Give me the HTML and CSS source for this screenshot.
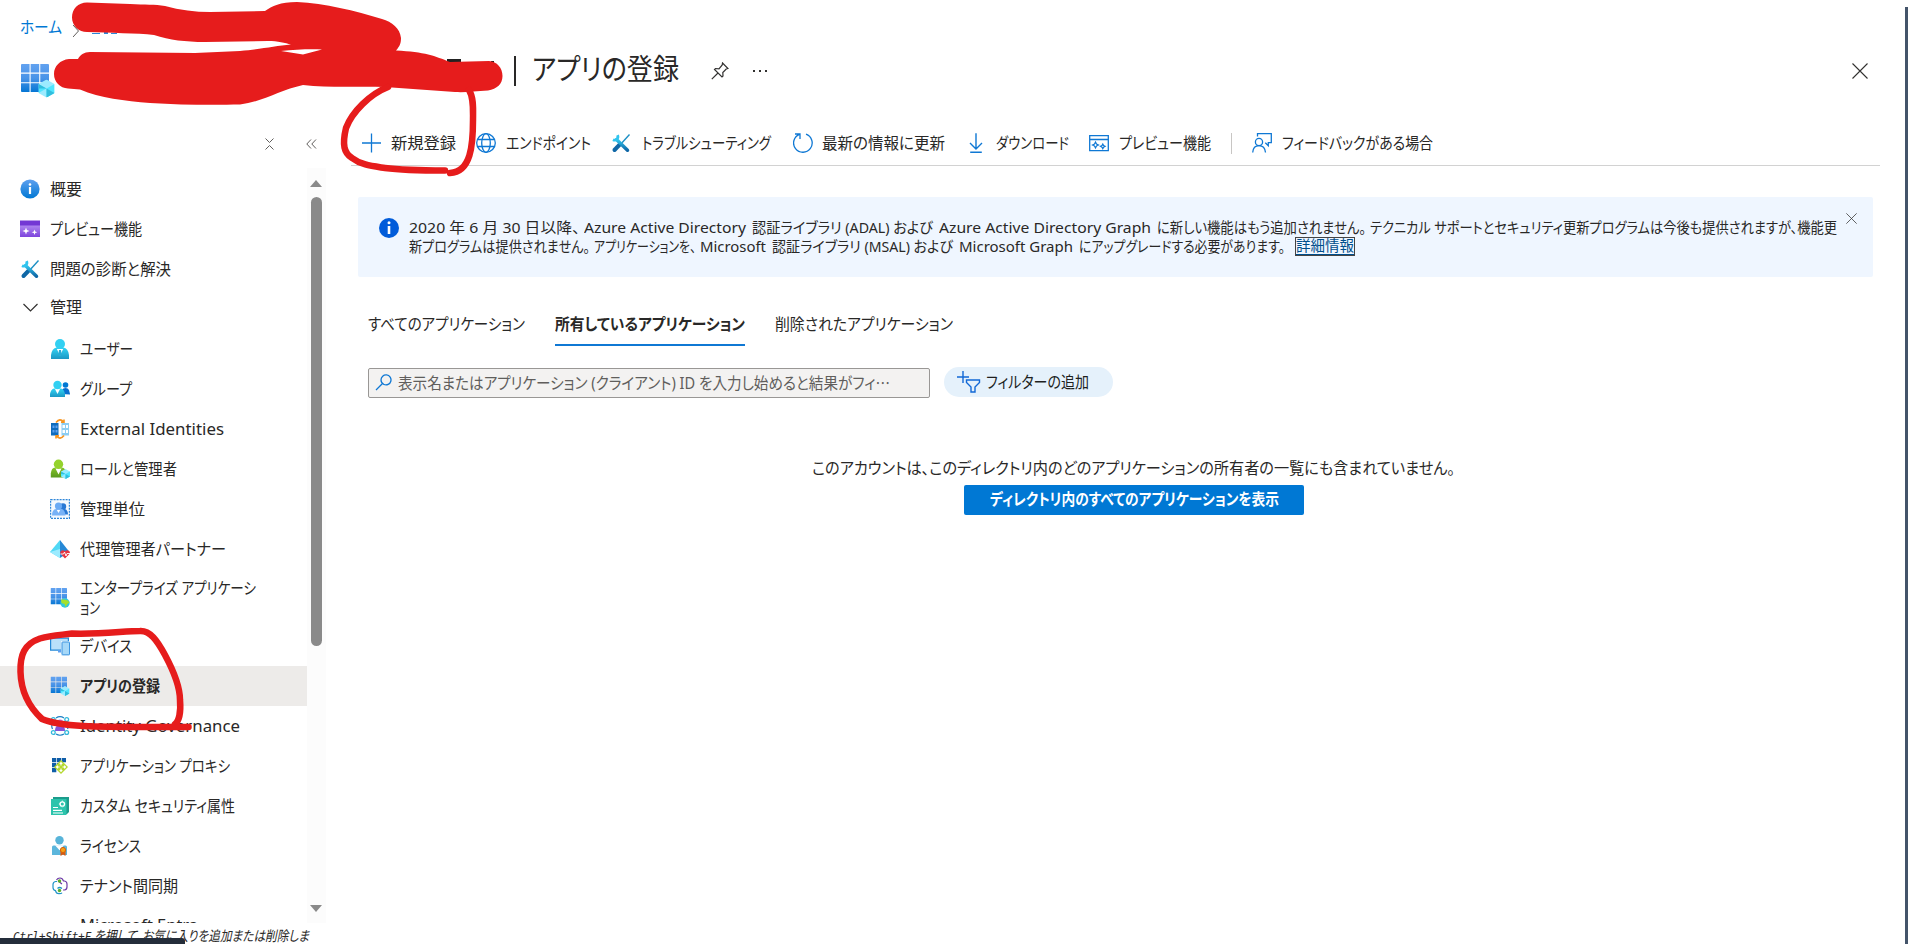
FILE: index.html
```html
<!DOCTYPE html>
<html lang="ja">
<head>
<meta charset="utf-8">
<title>アプリの登録</title>
<link rel="stylesheet" href="styles.css">
</head>
<body>
<svg class="defs" width="0" height="0" aria-hidden="true">
  <defs>
    <linearGradient id="gBlue" x1="0" y1="0" x2="0" y2="1"><stop offset="0" stop-color="#5ea0ef"/><stop offset="1" stop-color="#0078d4"/></linearGradient>
    <linearGradient id="gGrid" gradientUnits="userSpaceOnUse" x1="0" y1="0" x2="0" y2="18"><stop offset="0" stop-color="#62a2f0"/><stop offset=".5" stop-color="#4a94e8"/><stop offset="1" stop-color="#0576d4"/></linearGradient>
    <linearGradient id="gCyan" x1="0" y1="0" x2="0" y2="1"><stop offset="0" stop-color="#32d4f5"/><stop offset="1" stop-color="#1b97c4"/></linearGradient>
    <linearGradient id="gGreen" x1="0" y1="0" x2="0" y2="1"><stop offset="0" stop-color="#86c42a"/><stop offset="1" stop-color="#5a9a1e"/></linearGradient>
    <linearGradient id="gTool" x1="0" y1="0" x2="0" y2="1"><stop offset="0" stop-color="#32c8f0"/><stop offset="1" stop-color="#0f67a6"/></linearGradient>
    <linearGradient id="gPurple" x1="0" y1="0" x2="0" y2="1"><stop offset="0" stop-color="#b48cf2"/><stop offset="1" stop-color="#7d45dc"/></linearGradient>
  </defs>
  <symbol id="cube" viewBox="0 0 16 18"><path fill="#9cebff" d="M8 0l8 4.500v9L8 18 0 13.500v-9z"/><path fill="#50e6ff" d="M8 9l8-4.500v9L8 18zM0 4.500L8 9l-8 4.500z"/><path fill="#32bedd" d="M8 9l8 4.500L8 18zM0 4.500L8 9 0 9z"/></symbol>
  <symbol id="grid" viewBox="0 0 18 18"><path fill="url(#gGrid)" d="M0 .6Q0 0 .6 0H5.500V5.500H0zM6.200 0h5.500v5.500H6.200zM12.400 0h5q.6 0 .6.6v4.900h-5.600zM0 6.200h5.500v5.500H0zM6.200 6.200h5.500v5.500H6.200zM12.400 6.200H18v5.500h-5.600zM0 12.400h5.500V18H.6q-.6 0-.6-.6zM6.200 12.400h5.500V18H6.200zM12.400 12.400H18V18h-5.600z"/></symbol>
  <symbol id="info" viewBox="0 0 20 20"><circle cx="10" cy="10" r="9.600" fill="url(#gBlue)"/><circle cx="10" cy="5.500" r="1.300" fill="#fff"/><path fill="#fff" d="M8.900 8h2.200v7H8.900z"/></symbol>
  <symbol id="infoSolid" viewBox="0 0 20 20"><circle cx="10" cy="10" r="10" fill="#015cda"/><circle cx="10" cy="4.800" r="1.500" fill="#fff"/><path fill="#fff" d="M8.700 8h2.600v8H8.700z"/></symbol>
  <symbol id="preview" viewBox="0 0 20 20"><path fill="url(#gPurple)" d="M0 5h20v13H0z"/><path fill="#7337d4" d="M0 1.500h20v5H0z"/><path fill="#fff" d="M6 8.500l.9 2.600 2.600.9-2.600.9L6 15.500l-.9-2.600L2.500 12l2.600-.9zM14.500 10.500l.7 2.100 2.100.7-2.100.7-.7 2.100-.7-2.100-2.100-.7 2.100-.7z"/></symbol>
  <symbol id="tools" viewBox="0 0 20 20"><path stroke="#1c8fc4" stroke-width="1.400" d="M18.500 1.500L9 12"/><path stroke="#0f67a6" stroke-width="4" stroke-linecap="round" d="M8.300 12L3.500 17"/><path fill="none" stroke="url(#gTool)" stroke-width="3.500" stroke-linecap="round" d="M5.500 6.500L16.500 17.200"/><path fill="none" stroke="#30c4ee" stroke-width="2.800" d="M6.500 2.200c1.500 3-1.500 6-4.500 4.500"/></symbol>
  <symbol id="chev" viewBox="0 0 20 20"><path fill="none" stroke="#323130" stroke-width="1.200" d="M3.500 7l7 7 7-7"/></symbol>
  <symbol id="user" viewBox="0 0 20 20"><path fill="url(#gCyan)" d="M1 20v-4q1-7 5.500-7.500h7Q18 9 19 16v4z"/><path fill="#fff" d="M6.800 10h6.400L10 16.500z"/><circle cx="10" cy="5" r="5" fill="#32d0f2"/><path fill="#28acd6" d="M9 11h2l.7 4.500L10 17l-1.700-1.500z"/></symbol>
  <symbol id="group" viewBox="0 0 20 20"><circle cx="15.500" cy="6" r="2.800" fill="#0078d4"/><path fill="#0a6fd0" d="M11 15l1-4q1-2 3.500-2t3.500 2l1 4v.5z"/><path fill="url(#gCyan)" d="M0 18v-3q1-5 4-5.500h7q3 .5 4 5.500v3z"/><path fill="#fff" d="M5 10h5l-2.500 5z"/><circle cx="7.500" cy="6" r="4.200" fill="#32d0f2"/></symbol>
  <symbol id="external" viewBox="0 0 20 20"><path fill="#0f6cbd" d="M1 4h7.500v12.500H1z"/><path fill="#5ea0ef" d="M2.500 6.500h2v2.500h-2zM2.500 11h2v2.500h-2zM5.500 6.500h2v2.500h-2zM5.500 11h2v2.500h-2z"/><path fill="#8ccdf2" d="M11.500 4H19v12.500h-7.500z"/><path fill="#fff" d="M12.500 6H15v3h-2.500zM12.500 11H15v3h-2.500zM16 6h2v3h-2zM16 11h2v3h-2z"/><path fill="none" stroke="#f7941e" stroke-width="1.600" d="M6 3.500Q10-1.500 13.500 3M11 3.300h3V.5M14 16.500q-4 5-7.500.5M9 16.700H6v2.800"/></symbol>
  <symbol id="role" viewBox="0 0 20 20"><path fill="url(#gGreen)" d="M.8 18.500v-4Q1.500 8.500 5 8.500h7q3.500.5 4.500 6v4z"/><path fill="#fff" d="M5.500 9.500h6l-3 6z"/><circle cx="8.500" cy="5.200" r="4.700" fill="#94d22c"/><use href="#cube" x="11" y="10" width="9" height="10"/></symbol>
  <symbol id="unit" viewBox="0 0 20 20"><path fill="#f4f9fe" stroke="#2f86d8" stroke-width="1.200" stroke-dasharray="2 1" d="M.6.6h18.800v18.800H.6z"/><circle cx="13" cy="7.500" r="3.200" fill="#2878d4"/><path fill="#2878d4" d="M8 15.500l2-5.500h5q3 1 3 5.500z"/><circle cx="8.500" cy="7" r="3.600" fill="#6aaaf4"/><path fill="#78b2f6" d="M2 16.500q0-6 4-6.500h6q3 1 3.500 6.500z"/><path fill="#fff" d="M6.800 11h3.400L8.500 14z"/></symbol>
  <symbol id="partner" viewBox="0 0 20 20"><path fill="#50d8f5" d="M10 1L0 13l10 6z"/><path fill="#2588d6" d="M10 1l9.500 12L10 19z"/><path fill="#9cebff" d="M10 10L0 13l10 6z"/><path fill="#e6333f" d="M15 19.500l-4.300-4.500c-1.500-2.500 1.800-5.200 4.300-2.700 2.500-2.500 6.300.2 4.400 2.700z"/><path fill="none" stroke="#fff" stroke-width=".9" d="M10.500 15h3l1-2 1.500 4 1-2.500h3"/></symbol>
  <symbol id="enterprise" viewBox="0 0 20 20"><use href="#grid" x=".5" y="0" width="16.500" height="16.500"/><circle cx="15" cy="15" r="4.700" fill="#32c8dc"/><path fill="#a6e02a" d="M11 11.500h3l4 1 1.500 2-2 1.500-2 3-1-3-3-1z"/></symbol>
  <symbol id="device" viewBox="0 0 20 20"><path fill="#b9e0fa" stroke="#2589d8" stroke-width="1.200" d="M.6 2.100h17.800v12H.6z"/><path fill="#5ea0ef" d="M8 14h4v2.500H8z"/><path fill="#eaf6fe" d="M11 5h9v15h-9z"/><rect x="12" y="6" width="7.500" height="12.800" rx=".7" fill="#a6d8f8" stroke="#3c94e0"/></symbol>
  <symbol id="app" viewBox="0 0 20 20"><use href="#grid" x=".5" y=".5" width="16.500" height="16.500"/><use href="#cube" x="10.500" y="10" width="9" height="10"/></symbol>
  <symbol id="gov" viewBox="0 0 20 20"><circle cx="10" cy="7" r="3.500" fill="#a97bee"/><path fill="#8653d8" d="M5 15q0-5 3-5.500h4q3 .5 3 5.500z"/><g fill="#fff" stroke="#32b8dc" stroke-width="1.300"><circle cx="3.300" cy="3.500" r="1.900"/><circle cx="16.700" cy="3.500" r="1.900"/><circle cx="3.300" cy="16.500" r="1.900"/><circle cx="16.700" cy="16.500" r="1.900"/></g><path fill="none" stroke="#1b7fc4" stroke-width="1.200" d="M6 2q4-2.600 8 0M6 18q4 2.500 8 0M2.500 7q-1.500 3 0 6M17.500 7q1.500 3 0 6"/></symbol>
  <symbol id="proxy" viewBox="0 0 20 20"><path fill="#0f5ea8" d="M2 2h4.300v4.300H2zM7 2h4.300v4.300H7zM12 2h4v4.300h-4zM2 7h4.300v4.300H2zM7 7h4.300v4.300H7zM2 12h4.300v4.300H2z"/><path fill="#b4d82e" d="M11 4l7 7-7 7-7-7z"/><path fill="none" stroke="#fff" stroke-width="1.100" d="M11 6.500v3M11 12.500v3M6.500 11h3M12.500 11h3M9.700 7.800L11 6.500l1.300 1.300M9.700 14.200l1.300 1.300 1.300-1.300M7.800 9.700L6.500 11l1.300 1.300M14.200 9.700l1.300 1.300-1.300 1.300"/></symbol>
  <symbol id="attr" viewBox="0 0 20 20"><path fill="#1c9c8c" d="M3 1h16v15l-2 2H3z"/><path fill="#2cc4ac" d="M1 3h15.500v16H1z"/><path fill="none" stroke="#fff" stroke-width="1.200" d="M3 11.500h5M3 14.300h9M3 17h10"/><circle cx="12.300" cy="8" r="2.200" fill="none" stroke="#fff" stroke-width="1.300"/><path stroke="#fff" stroke-width="1" stroke-dasharray="1 5.800" d="M12.300 4.600v7M8.900 8h7"/></symbol>
  <symbol id="license" viewBox="0 0 20 20"><circle cx="9.500" cy="4.300" r="4.200" fill="#58b4d9"/><path fill="#5cb6dc" d="M2 11q0-1.500 1.500-1.500h12q1.500 0 1.500 1.500v8H2z"/><path fill="#fff" d="M5 9.300h9l-4.500 5z"/><path fill="#d85a10" d="M10.500 14h5v6L13 18.500 10.500 20z"/><circle cx="13" cy="14" r="2.600" fill="#f7a014" stroke="#d8600c"/></symbol>
  <symbol id="sync" viewBox="0 0 20 20"><path fill="none" stroke="#6e3aa8" stroke-width="1.200" d="M6.500 4q1-2 3.500-2t3.500 3h1q2.500.5 2.500 3v3q0 2.500-2.500 3H13M12 8L9.500 6 8 4.500"/><path fill="none" stroke="#2094c8" stroke-width="1.200" d="M7 5.500H5.500q-2.500.5-2.500 3v3q0 2.500 2.500 3.200.5 3 3.500 3 2.500 0 3-1M7.500 12.500q2-2 4.500 0"/><circle cx="9.500" cy="5" r="1.700" fill="#5ab028"/><circle cx="9.500" cy="14.500" r="1.700" fill="#5ab028"/></symbol>
  <symbol id="plus" viewBox="0 0 20 20"><path stroke="#0f78d4" stroke-width="1.300" d="M10.500.5v19M1 10h19"/></symbol>
  <symbol id="globe" viewBox="0 0 20 20"><g fill="none" stroke="#0f78d4" stroke-width="1.300"><circle cx="10" cy="10" r="9.300"/><ellipse cx="10" cy="10" rx="4.300" ry="9.300"/><path d="M1.700 6.500h16.600M1.700 13.500h16.600"/></g></symbol>
  <symbol id="refresh" viewBox="0 0 20 20"><path fill="none" stroke="#0f78d4" stroke-width="1.300" d="M13 1.200A9.300 9.300 0 1 1 6.500 1.300M2 1h5v5"/></symbol>
  <symbol id="down" viewBox="0 0 20 20"><path fill="none" stroke="#0f78d4" stroke-width="1.400" d="M10 .3v15M4 10l6 6 6-6M4.200 19.300h11.600"/></symbol>
  <symbol id="prevline" viewBox="0 0 20 20"><path fill="none" stroke="#0f78d4" stroke-width="1.300" d="M.7 2.700h18.600v15H.7zM.7 6.500h18.600"/><path fill="none" stroke="#0f78d4" stroke-width="1.200" d="M6.500 9l1 2 2 1-2 1-1 2-1-2-2-1 2-1zM13.800 11l.8 1.500 1.500.8-1.500.8-.8 1.500-.8-1.500-1.500-.8 1.500-.8z"/></symbol>
  <symbol id="feedback" viewBox="0 0 20 20"><g fill="none" stroke="#0f78d4" stroke-width="1.300"><path d="M5.500 3.500V.7h13.800v9h-3v3l-3-3"/><circle cx="7" cy="9" r="3.600"/><path d="M.7 19.500q.5-6.800 6.300-6.800t6.500 6.800"/></g></symbol>
  <symbol id="close" viewBox="0 0 16 16"><path stroke="#323130" stroke-width="1.100" d="M.5.5l15 15M15.500.5l-15 15"/></symbol>
</svg>

<div class="page">
  <nav class="crumb"><a class="t" data-w="42">ホーム</a><svg width="6" height="12" viewBox="0 0 6 12"><path d="M0 0l5.500 6L0 12" fill="none" stroke="#605e5c"/></svg></nav>

  <header class="head">
    <svg class="logo" width="34" height="34" viewBox="0 0 34 34"><use href="#grid" width="28" height="28"/><use href="#cube" x="17.500" y="15.500" width="16" height="18"/></svg>
    <i class="bar"></i>
    <h1 class="t" data-w="147">アプリの登録</h1>
    <svg class="pin" width="18" height="18" viewBox="0 0 18 18"><path fill="none" stroke="#323130" stroke-width="1.200" d="M11.500 1l5.500 5.500-1.800.5-3.400 3.500.2 3.500-1 1L3.500 7.500l1-1 3.500.3L11.200 3zM7 11L.8 17.200"/></svg>
    <svg class="dots" width="14" height="4" viewBox="0 0 14 4"><path fill="#323130" d="M0 1h2v2H0zM6 1h2v2H6zM12 1h2v2h-2z"/></svg>
    <svg class="x" width="16" height="16"><use href="#close"/></svg>
  </header>

  <div class="body">
    <aside class="side">
      <div class="sidetools">
        <svg width="9" height="12" viewBox="0 0 9 12"><path fill="none" stroke="#605e5c" d="M.5.5l4 4 4-4M.5 11.500l4-4 4 4"/></svg>
        <svg width="11" height="10" viewBox="0 0 11 10"><path fill="none" stroke="#605e5c" d="M5 .5L.8 5 5 9.500M10 .5L5.800 5 10 9.500"/></svg>
      </div>
      <div class="menuwrap">
        <ul class="menu">
          <li><svg><use href="#info"/></svg><span class="t" data-w="32">概要</span></li>
          <li><svg><use href="#preview"/></svg><span class="t" data-w="92">プレビュー機能</span></li>
          <li><svg><use href="#tools"/></svg><span class="t" data-w="121">問題の診断と解決</span></li>
          <li class="sec"><svg><use href="#chev"/></svg><span class="t" data-w="32">管理</span></li>
          <li class="sub"><svg><use href="#user"/></svg><span class="t" data-w="53">ユーザー</span></li>
          <li class="sub"><svg><use href="#group"/></svg><span class="t" data-w="52">グループ</span></li>
          <li class="sub"><svg><use href="#external"/></svg><span class="t" data-w="144">External Identities</span></li>
          <li class="sub"><svg><use href="#role"/></svg><span class="t" data-w="97">ロールと管理者</span></li>
          <li class="sub"><svg><use href="#unit"/></svg><span class="t" data-w="65">管理単位</span></li>
          <li class="sub"><svg><use href="#partner"/></svg><span class="t" data-w="146">代理管理者パートナー</span></li>
          <li class="sub two"><svg><use href="#enterprise"/></svg><div><span class="t" data-w="176">エンタープライズ アプリケーシ</span><br><span class="t" data-w="20">ョン</span></div></li>
          <li class="sub"><svg><use href="#device"/></svg><span class="t" data-w="52">デバイス</span></li>
          <li class="sub on"><svg><use href="#app"/></svg><span class="t" data-w="80">アプリの登録</span></li>
          <li class="sub"><svg><use href="#gov"/></svg><span class="t" data-w="160">Identity Governance</span></li>
          <li class="sub"><svg><use href="#proxy"/></svg><span class="t" data-w="150">アプリケーション プロキシ</span></li>
          <li class="sub"><svg><use href="#attr"/></svg><span class="t" data-w="155">カスタム セキュリティ属性</span></li>
          <li class="sub"><svg><use href="#license"/></svg><span class="t" data-w="61">ライセンス</span></li>
          <li class="sub"><svg><use href="#sync"/></svg><span class="t" data-w="98">テナント間同期</span></li>
          <li class="sub last"><svg></svg><span class="t" data-w="118">Microsoft Entra</span></li>
        </ul>
        <div class="scroll"><i class="up"></i><i class="thumb"></i><i class="dn"></i></div>
      </div>
      <p class="hint"><span class="t" data-w="296"><span class="mono">Ctrl+Shift+F</span> を押して、お気に入りを追加または削除しま</span></p>
    </aside>

    <main class="main">
      <div class="cmds">
        <div class="cmd"><svg><use href="#plus"/></svg><span class="t" data-w="65">新規登録</span></div>
        <div class="cmd c2"><svg><use href="#globe"/></svg><span class="t" data-w="85">エンドポイント</span></div>
        <div class="cmd c3"><svg><use href="#tools"/></svg><span class="t" data-w="129">トラブルシューティング</span></div>
        <div class="cmd c4"><svg><use href="#refresh"/></svg><span class="t" data-w="123">最新の情報に更新</span></div>
        <div class="cmd c5"><svg><use href="#down"/></svg><span class="t" data-w="73">ダウンロード</span></div>
        <div class="cmd c6"><svg><use href="#prevline"/></svg><span class="t" data-w="92">プレビュー機能</span></div>
        <i class="sep"></i>
        <div class="cmd"><svg><use href="#feedback"/></svg><span class="t" data-w="151">フィードバックがある場合</span></div>
      </div>

      <section class="banner">
        <svg width="20" height="20"><use href="#infoSolid"/></svg>
        <div class="msg">
          <div><span class="t" data-w="171">2020 年 6 月 30 日以降、</span><span class="t g3" data-w="162">Azure Active Directory</span><span class="t g6" data-w="181">認証ライブラリ (ADAL) および</span><span class="t g6" data-w="212">Azure Active Directory Graph</span><span class="t g6" data-w="209">に新しい機能はもう追加されません。</span><span class="t g3" data-w="467">テクニカル サポートとセキュリティ更新プログラムは今後も提供されますが、機能更</span></div>
          <div><span class="t" data-w="181">新プログラムは提供されません。</span><span class="t g3" data-w="102">アプリケーションを、</span><span class="t g3" data-w="66">Microsoft</span><span class="t g6" data-w="181">認証ライブラリ (MSAL) および</span><span class="t g6" data-w="114">Microsoft Graph</span><span class="t g6" data-w="206">にアップグレードする必要があります。</span><a class="more"><span class="t" data-w="58">詳細情報</span></a></div>
        </div>
        <svg class="bx" width="11" height="11"><use href="#close"/></svg>
      </section>

      <div class="tabs">
        <div><span class="t" data-w="157">すべてのアプリケーション</span></div>
        <div class="on"><span class="t" data-w="190">所有しているアプリケーション</span></div>
        <div><span class="t" data-w="178">削除されたアプリケーション</span></div>
      </div>

      <div class="filters">
        <div class="search"><svg width="17" height="17" viewBox="0 0 17 17"><path fill="none" stroke="#0f78d4" stroke-width="1.300" d="M7 10L1 16M6 6a5 5 0 1 1 3 4.500 5 5 0 0 1-3-4.500z"/></svg><span class="t" data-w="492">表示名またはアプリケーション (クライアント) ID を入力し始めると結果がフィ<span class="cjk">…</span></span></div>
        <div class="pill"><svg width="24" height="22" viewBox="0 0 24 22"><path fill="none" stroke="#1268d6" stroke-width="1.400" d="M6 0v12M0 6h12M9.500 9h13v2.500l-4.500 4.500v5h-4v-5l-4.500-4.500z"/></svg><span class="t" data-w="103">フィルターの追加</span></div>
      </div>

      <div class="empty">
        <p><span class="t" data-w="643">このアカウントは、このディレクトリ内のどのアプリケーションの所有者の一覧にも含まれていません。</span></p>
        <button type="button"><span class="t" data-w="289">ディレクトリ内のすべてのアプリケーションを表示</span></button>
      </div>
    </main>
  </div>
</div>

<i class="edge"></i>
<i class="status"></i>
<svg class="ink" width="520" height="760" viewBox="0 0 520 760">
  <path fill="#2b88d8" d="M92 33h8v1h-8zM104 32h4v2h-4zM111 33h6v1h-6z"/>
  <path fill="#222" d="M447 59h14v4h-14zM491 61h3v2h-3z"/>
  <path fill="#e61c1c" fill-rule="evenodd" d="M87 2.500C78 2.500 72 9 72 17.500S79 32 87 32C110 33 137 33 154 35C170 40 185 42 205 42L268 41C278 41 285 43 291 44.500C275 46 262 49 240 51C225 52 210 52 195 53L90 52C84 52 80 55 78 59L69 59C60 60 54 66 54 74S60 88 68 88.500L80 89.500C100 98 125 101 150 103C180 105 215 105 240 104.500C262 102 280 90 303 85C330 88 360 86 385 87L455 92C465 92.500 475 91.500 488 90.500C497 89 502.500 84 502.500 76S497 61.500 489 61L450 62C435 56 425 52 396 50.500C400 46 401 43 401 38C400 28 392 22 382 19C355 11 325 3 297 2C280 2 272 6 265 11L210 12C195 12 180 10 165 6C155 4 145 5 130 4ZM281 51C295 49.500 310 49 322 49.500L303 54.500Z"/>
  <g fill="none" stroke="#e61c1c" stroke-width="6.500" stroke-linecap="round">
    <path d="M388 87C370 94 352 112 346 128C342 145 344 153 352 158C361 165 372 166 385 168C400 170 425 170.500 445 170.500"/>
    <path d="M469 90C474 98 473 110 473 120C473 145 471 172 450 173"/>
    <path d="M188.500 727H145C100 727 60 727 42 719C28 706 21 690 20.500 672C20 655 24 644 40 638.500C52 635 62 635 72 633.500C100 634.500 125 631 140 631C150 630.500 157 640 165 655C172 668 180 685 180 700C181 712 179 721 175 724"/>
  </g>
</svg>
<script src="fit.js"></script>
</body>
</html>
```
FILE: styles.css
```css
* { box-sizing: border-box; }
body {
  margin: 0;
  width: 1908px;
  height: 944px;
  overflow: hidden;
  position: relative;
  background: #fff;
  color: #292827;
  font-family: "Noto Sans", "Noto Sans CJK JP", sans-serif;
  font-size: 16px;
  line-height: 20px;
  font-feature-settings: "palt";
}
.defs { position: absolute; }
svg { flex: none; display: block; }
i { display: block; flex: none; }
.t { display: inline-block; white-space: nowrap; transform-origin: 0 50%; }
.cjk { font-family: "Noto Sans CJK JP", sans-serif; }

.page { display: flex; flex-direction: column; height: 944px; }
.crumb { display: flex; align-items: center; gap: 11px; height: 36px; padding: 18px 0 0 20px; color: #0078d4; }
.crumb svg { margin-top: 8px; }

.head { display: flex; align-items: center; height: 80px; padding: 0 40px 14px 21px; }
.logo { margin-top: 23px; }
.bar { width: 2px; height: 30px; margin: 3px 16px 0 459px; background: #292827; }
.head h1 { margin: 0; font-size: 29px; line-height: 38px; font-weight: 400; }
.pin { margin: 3px 0 0 32px; }
.dots { margin: 3px 0 0 24px; }
.x { margin: 3px 0 0 auto; }

.body { display: flex; flex: 1; min-height: 0; }
.side { width: 351px; display: flex; flex-direction: column; }
.sidetools { display: flex; flex: none; gap: 32px; align-items: center; height: 52px; padding: 4px 0 0 265px; }
.menuwrap { display: flex; flex: none; height: 755px; width: 326px; overflow: hidden; }
.menu { list-style: none; margin: 0; padding: 1px 0 0; width: 307px; }
.menu li { display: flex; align-items: center; gap: 10px; height: 40px; padding-left: 20px; }
.menu svg { width: 20px; height: 20px; }
.menu .sec { padding-bottom: 5px; }
.menu .sub { padding-left: 50px; }
.menu .two { height: 57px; }
.menu .on { background: #edebe9; font-weight: 700; }
.menu .last { height: 37px; }
.scroll { width: 19px; padding: 12px 3px 11px 2px; background: #fcfcfc; display: flex; flex-direction: column; align-items: center; }
.up, .dn { border: 6.5px solid transparent; border-top: 0; border-bottom: 7px solid #8a8a8a; }
.dn { border-top: 7px solid #8a8a8a; border-bottom: 0; margin-top: auto; }
.thumb { width: 11px; height: 449px; margin-top: 10px; border-radius: 6px; background: #8a8a8a; }
.hint { flex: none; margin: 3px 0 0 13px; font-size: 14px; line-height: 20px; font-style: italic; }
.mono { font-family: "DejaVu Sans Mono", monospace; font-size: 13px; }

.main { flex: 1; padding-right: 28px; }
.cmds { display: flex; align-items: center; height: 50px; padding: 5px 0 0 10px; border-bottom: 1px solid #d2d2d2; }
.cmd { display: flex; align-items: center; gap: 10px; }
.cmd svg { width: 20px; height: 20px; }
.c2 { margin-left: 20px; }
.c3 { margin-left: 20px; gap: 11px; }
.c4 { margin-left: 22px; gap: 9px; }
.c5 { margin-left: 21px; }
.c6 { margin-left: 20px; }
.sep { width: 1px; height: 21px; margin: 0 20px; background: #c8c6c4; }

.banner { display: flex; align-items: flex-start; height: 80px; width: 1515px; margin: 31px 0 0 7px; padding: 21px 16px 0 21px; border-radius: 2px; background: #eff6ff; }
.msg { padding-left: 10px; font-size: 15px; line-height: 19px; }
.msg > div { display: flex; height: 19px; }
.bx { margin: -5px 0 0 auto; }
.g3 { margin-left: 4px; }
.g6 { margin-left: 6px; }
.more { margin-left: 10px; height: 19px; padding: 0 1px; line-height: 17px; color: #004e8c; outline: 1px solid #444; outline-offset: -1px; border-bottom: 2px solid #004e8c; }

.tabs { display: flex; gap: 30px; margin: 37px 0 0 17px; }
.tabs div { height: 32px; border-bottom: 2px solid transparent; }
.tabs .on { font-weight: 700; border-color: #0f78d4; }

.filters { display: flex; gap: 14px; margin: 21px 0 0 17px; align-items: flex-start; }
.search { display: flex; align-items: center; gap: 6px; width: 562px; height: 30px; margin-top: 1px; padding: 0 0 1px 6px; border: 1px solid #999795; border-radius: 2px; background: #f3f2f1; color: #605e5c; }
.pill { display: flex; align-items: center; gap: 5px; width: 169px; height: 30px; padding-left: 13px; border-radius: 15px; background: #e5f1fb; color: #201f1e; }

.empty { display: flex; flex-direction: column; align-items: center; margin: 60px 0 0; padding-left: 37px; }
.empty p { margin: 0 2px 0 0; height: 27px; }
.empty button { width: 340px; height: 30px; padding: 0 0 2px; border: 0; border-radius: 2px; background: #0078d4; color: #fff; font: inherit; font-weight: 700; font-feature-settings: "palt"; }

.edge { position: absolute; right: 0; top: 7px; width: 3px; height: 937px; background: #44546a; }
.status { position: absolute; left: 0; bottom: 0; width: 185px; height: 6px; border-radius: 0 3px 0 0; background: #242d3a; }
.ink { position: absolute; left: 0; top: 0; }
```
FILE: fit.js
```js
// Condenses each label to its nominal width.
document.querySelectorAll('.t').forEach(function (el) {
  var w = Number(el.dataset.w);
  var natural = el.getBoundingClientRect().width;
  el.style.transform = 'scaleX(' + w / natural + ')';
  el.style.marginRight = (w - natural) + 'px';
});
```
